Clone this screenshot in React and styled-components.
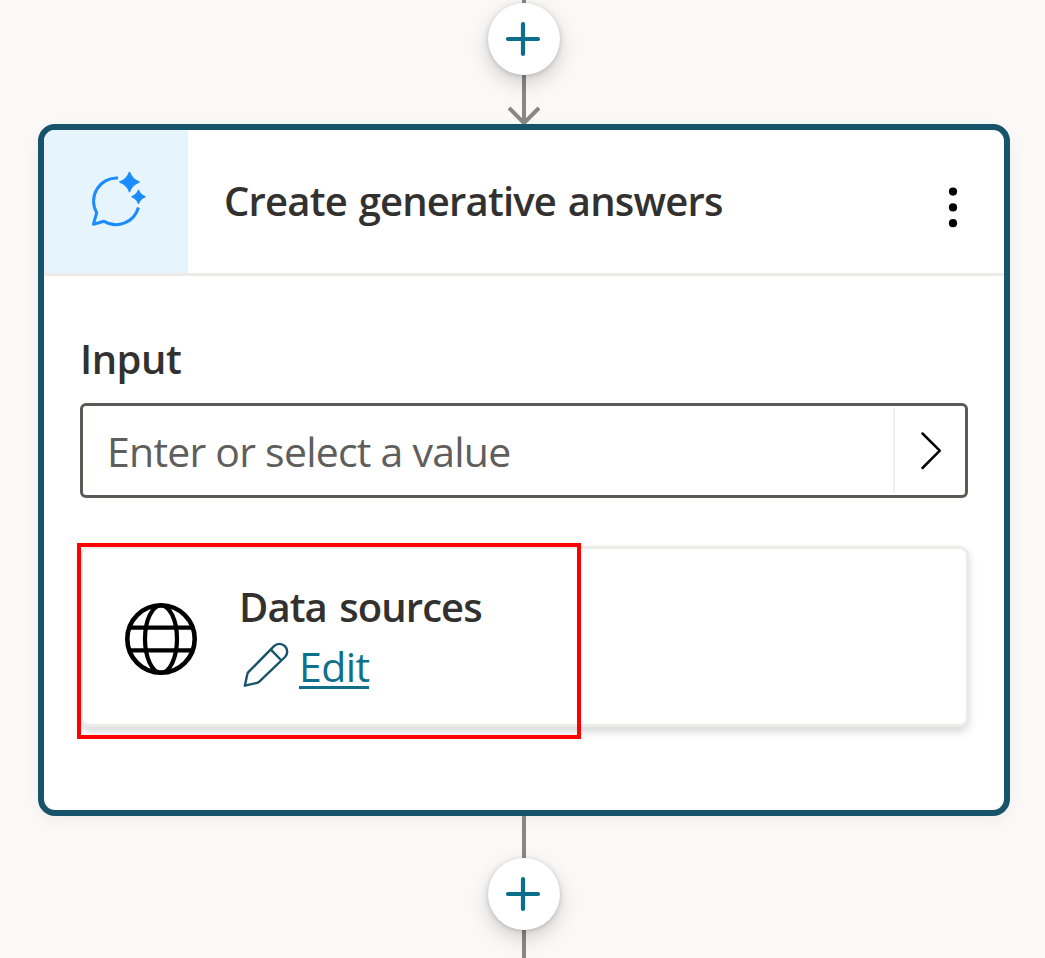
import React from "react";
import styled, { createGlobalStyle } from "styled-components";

const GlobalStyle = createGlobalStyle`
  *, *::before, *::after { box-sizing: border-box; }
  body {
    margin: 0;
    background: #faf9f8;
    font-family: "Open Sans", "Noto Sans", sans-serif;
    color: #323130;
  }
`;

const Canvas = styled.main`
  display: flex;
  flex-direction: column;
  align-items: center;
  width: 1045px;
  height: 958px;
  padding-left: 3px;
  overflow: hidden;
  background: #faf9f8;
`;

const Connector = styled.div`
  display: flex;
  flex: none;
  align-items: flex-end;
  justify-content: center;
  width: 4px;
  height: ${(p) => p.$length}px;
  background: #8a8886;
`;

const ArrowHead = styled.svg`
  display: block;
  flex: none;
  width: 36px;
  height: 20px;
  margin-bottom: -1px;
`;

const AddButton = styled.button`
  display: grid;
  place-items: center;
  flex: none;
  width: 72px;
  height: 72px;
  padding: 0 2px 0 0;
  border: 0;
  border-radius: 50%;
  background: #fff;
  box-shadow: 0 8px 20px rgba(0, 0, 0, 0.17), 0 1px 5px rgba(0, 0, 0, 0.18);
  z-index: 1;
`;

const Card = styled.section`
  flex: none;
  width: 972px;
  height: 692px;
  border: 6px solid #17536a;
  border-radius: 17px;
  background: #fff;
  box-shadow: 0 4px 14px rgba(0, 0, 0, 0.05);
`;

const CardHeader = styled.header`
  display: flex;
  align-items: center;
  height: 146px;
  border-bottom: 3px solid #edebe9;
`;

const IconTile = styled.div`
  display: grid;
  place-items: center;
  width: 144px;
  height: 100%;
  padding: 0 0 6px 5px;
  border-top-left-radius: 11px;
  background: #e6f4fe;
`;

const Title = styled.h1`
  flex: 1;
  margin: 0 0 2px 36px;
  font-size: 40px;
  font-weight: 600;
  line-height: 56px;
  letter-spacing: -0.81px;
  word-spacing: 2.2px;
  white-space: nowrap;
`;

const MenuButton = styled.button`
  display: grid;
  place-items: center;
  width: 40px;
  height: 56px;
  margin: 12px 31px 0 0;
  padding: 0;
  border: 0;
  background: none;
`;

const CardBody = styled.div`
  display: flex;
  flex-direction: column;
  padding: 55px 36px 0;
`;

const Label = styled.label`
  font-size: 40px;
  font-weight: 600;
  line-height: 56px;
  letter-spacing: ${(p) => p.$tracking}px;
  word-spacing: 3px;
`;

const ValueField = styled.div`
  display: flex;
  align-items: center;
  height: 95px;
  margin-top: 16px;
  padding-left: 24px;
  border: 3px solid #5b5a57;
  border-radius: 6px;
`;

const Placeholder = styled.span`
  flex: 1;
  padding-top: 1px;
  font-size: 41px;
  line-height: 56px;
  letter-spacing: -0.77px;
  color: #605e5c;
  white-space: nowrap;
`;

const FieldAction = styled.button`
  display: grid;
  place-items: center;
  width: 72px;
  height: 85px;
  padding: 0 0 0 2px;
  border: 0;
  border-left: 2px solid #f0eeee;
  background: none;
`;

const SourceCard = styled.div`
  position: relative;
  display: flex;
  align-items: center;
  height: 181px;
  margin: 48px -1px 0 0;
  padding: 5px 0 0 41px;
  border: 3px solid #edebe9;
  border-radius: 9px;
  box-shadow: 0 5px 9px rgba(0, 0, 0, 0.15);
`;

const Highlight = styled.div`
  position: absolute;
  top: -6px;
  left: -6px;
  width: 504px;
  height: 196px;
  border: 4px solid #fe0000;
`;

const SourceText = styled.div`
  display: flex;
  flex-direction: column;
  margin: 0 0 2px 41px;
`;

const EditRow = styled.div`
  display: flex;
  align-items: center;
  gap: 11px;
  height: 60px;
  margin: 3px 0 0 3px;
`;

const EditLink = styled.a`
  border-bottom: 3px solid #0f6f8a;
  font-size: 41px;
  line-height: 40px;
  letter-spacing: -0.6px;
  color: #0f708c;
`;

const Icon = styled.svg`
  display: block;
  flex: none;
  overflow: visible;
`;

const PencilDrawing = styled(Icon)`
  margin-bottom: 6px;
`;

const PlusIcon = () => (
  <Icon width="36" height="36" viewBox="0 0 36 36" stroke="#0b6f8b" strokeWidth="4.2" strokeLinecap="round">
    <path d="M3 18H33M18 3V33" />
  </Icon>
);

const ChatSparkleIcon = () => (
  <Icon width="56" height="56" viewBox="91 171 56 56" fill="none" stroke="#1a8cff" strokeLinejoin="round">
    <path
      d="M118 178A23.2 23.2 0 0 0 96.7 212.8L93.4 224.2L104 221.2A23.2 23.2 0 0 0 138.4 207.5"
      strokeWidth="3"
    />
    <path
      d="M129.5 172.5Q131.8 179.5 139 182Q131.8 184.5 129.5 191.5Q127.2 184.5 120 182Q127.2 179.5 129.5 172.5Z"
      fill="#1a8cff"
      strokeWidth="1.6"
    />
    <path
      d="M138.5 190.5Q140.2 195.1 144.8 196.8Q140.2 198.5 138.5 203.1Q136.8 198.5 132.2 196.8Q136.8 195.1 138.5 190.5Z"
      fill="#1a8cff"
      strokeWidth="1.6"
    />
  </Icon>
);

const MoreIcon = () => (
  <Icon width="10" height="42" viewBox="0 0 10 42">
    <circle cx="5" cy="4.6" r="4.1" />
    <circle cx="5" cy="20.4" r="4.1" />
    <circle cx="5" cy="36.2" r="4.1" />
  </Icon>
);

const ChevronIcon = () => (
  <Icon width="20" height="38" viewBox="0 0 20 38" fill="none" stroke="#000" strokeWidth="2.5" strokeLinecap="round" strokeLinejoin="round">
    <path d="M1.5 1.5L18.8 18.7L1.5 36" />
  </Icon>
);

const GlobeIcon = () => (
  <Icon width="74" height="74" viewBox="0 0 74 74" fill="none" stroke="#000" strokeWidth="4.2">
    <circle cx="37" cy="37" r="33.7" strokeWidth="4.6" />
    <ellipse cx="37" cy="37" rx="16" ry="33.7" />
    <path d="M5 25.6H69M5 48.4H69" />
  </Icon>
);

const PencilIcon = () => (
  <PencilDrawing width="46" height="46" viewBox="243 642 46 46" fill="none" stroke="#17536a" strokeWidth="2.4" strokeLinejoin="round">
    <path d="M245.8 685.7L248.3 674.2Q248.6 672.9 249.6 671.9L275 646.2A7.7 7.7 0 0 1 286 657L260.3 681.6Q259.3 682.5 258 682.9Z" />
    <path d="M271.8 649.6L282 660" />
  </PencilDrawing>
);

export default function App() {
  return (
    <>
      <GlobalStyle />
      <Canvas>
        <Connector $length={3} />
        <AddButton aria-label="Add node above">
          <PlusIcon />
        </AddButton>
        <Connector $length={49}>
          <ArrowHead viewBox="0 0 36 20" fill="none" stroke="#8a8886" strokeWidth="4">
            <path d="M3 3L18 18L33 3" />
          </ArrowHead>
        </Connector>
        <Card>
          <CardHeader>
            <IconTile>
              <ChatSparkleIcon />
            </IconTile>
            <Title>Create generative answers</Title>
            <MenuButton aria-label="More options">
              <MoreIcon />
            </MenuButton>
          </CardHeader>
          <CardBody>
            <Label $tracking={-0.5}>Input</Label>
            <ValueField>
              <Placeholder>Enter or select a value</Placeholder>
              <FieldAction aria-label="Select a value">
                <ChevronIcon />
              </FieldAction>
            </ValueField>
            <SourceCard>
              <GlobeIcon />
              <SourceText>
                <Label as="strong" $tracking={-0.93}>Data sources</Label>
                <EditRow>
                  <PencilIcon />
                  <EditLink>Edit</EditLink>
                </EditRow>
              </SourceText>
              <Highlight />
            </SourceCard>
          </CardBody>
        </Card>
        <Connector $length={42} />
        <AddButton aria-label="Add node below">
          <PlusIcon />
        </AddButton>
        <Connector $length={28} />
      </Canvas>
    </>
  );
}
